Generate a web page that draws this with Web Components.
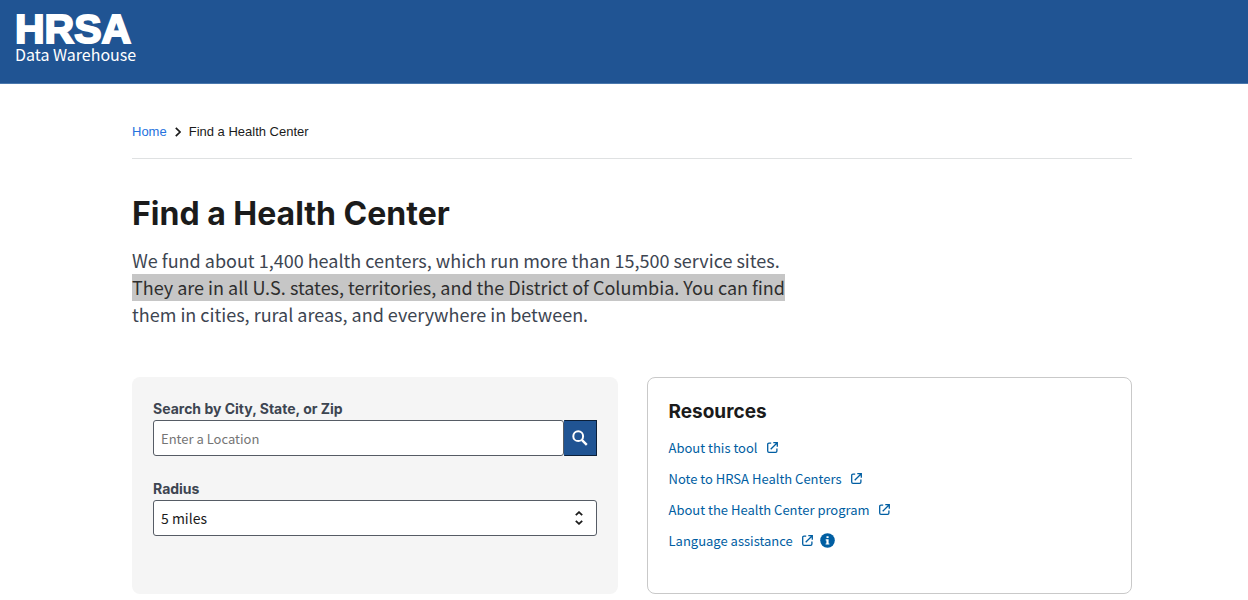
<!DOCTYPE html>
<html lang="en">
<head>
<meta charset="utf-8">
<meta name="viewport" content="width=device-width, initial-scale=1">
<title>Find a Health Center</title>
<style>
  body {
    margin: 0;
    background: #fff;
    color: #3d4551;
    --heading: Inter, "Liberation Sans", sans-serif;
    --text: "Noto Sans CJK SC", "Noto Sans", sans-serif;
    --brand: #205493;
    --link: #005ea2;
    font-family: var(--text);
  }
</style>
</head>
<body>
<site-header></site-header>
<page-content>
  <bread-crumb slot="crumbs" current="Find a Health Center"></bread-crumb>
  <span slot="title">Find a Health Center</span>
  <span slot="intro">We fund about 1,400 health centers, which run more than 15,500 service sites. <high-light>They are in all U.S. states, territories, and the District of Columbia. You can find</high-light> them in cities, rural areas, and everywhere in between.</span>
  <search-panel></search-panel>
  <resources-card>
    <resource-link>About this tool</resource-link>
    <resource-link>Note to HRSA Health Centers</resource-link>
    <resource-link>About the Health Center program</resource-link>
    <resource-link info>Language assistance</resource-link>
  </resources-card>
</page-content>

<script>
(function () {
  // shared base: each component only supplies its markup
  class BaseComp extends HTMLElement {
    connectedCallback() {
      if (this.shadowRoot) return;
      this.attachShadow({ mode: "open" }).innerHTML = this.render();
    }
  }

  class SiteHeader extends BaseComp {
    render() {
      return `
  <style>
    :host { display: block; background: var(--brand); border-bottom: 1px solid #4a78ad; }
    a { display: block; width: 150px; height: 83px; }
    svg { display: block; }
    .name { font: 700 41px "Liberation Sans", sans-serif; stroke: #fff; stroke-width: 2; }
    .sub { font: 16px "Noto Sans CJK SC", sans-serif; }
  </style>
  <a href="#" aria-label="HRSA Data Warehouse">
    <svg width="150" height="83" fill="#fff">
      <text class="name" x="15" y="43">HRSA</text>
      <text class="sub" x="15" y="61">Data Warehouse</text>
    </svg>
  </a>`;
    }
  }

  class PageContent extends BaseComp {
    render() {
      return `
  <style>
    :host { display: block; padding: 36px 116px 6px 132px; }
    h1 { margin: 34px 0 12px; font: 700 32px/42px var(--heading); color: #1b1b1b; }
    p { margin: 0 0 49px; max-width: 660px; font-size: 18px; line-height: 27px; }
    .cards { display: grid; grid-template-columns: 1fr 1fr; gap: 29px; }
  </style>
  <main>
    <slot name="crumbs"></slot>
    <h1><slot name="title"></slot></h1>
    <p><slot name="intro"></slot></p>
    <div class="cards"><slot></slot></div>
  </main>`;
    }
  }

  class BreadCrumb extends BaseComp {
    render() {
      return `
  <style>
    :host { display: block; border-bottom: 1px solid #dfe1e2; }
    nav {
      display: flex;
      align-items: center;
      gap: 8px;
      padding-bottom: 14px;
      font: 13px/24px "Liberation Sans", sans-serif;
      color: #1b1b1b;
    }
    a { color: #2672de; text-decoration: none; }
  </style>
  <nav aria-label="Breadcrumb">
    <a href="#">Home</a>
    <svg width="6" height="10" viewBox="0 0 6 10" fill="none" stroke="#1b1b1b" stroke-width="1.7"><path d="M.8.8 5 5 .8 9.2"/></svg>
    <span>${this.getAttribute("current")}</span>
  </nav>`;
    }
  }

  class HighLight extends BaseComp {
    render() {
      return `
  <style>
    :host { display: inline; }
    mark { padding-bottom: 1px; background: #c6c6c6; color: #2e2e2e; }
  </style>
  <mark><slot></slot></mark>`;
    }
  }

  class SearchPanel extends BaseComp {
    render() {
      return `
  <style>
    :host { display: block; background: #f5f5f5; border-radius: 8px; }
    form { padding: 20px 21px 58px; }
    label { display: block; font: 700 14px/23px var(--heading); color: #3d4551; }
    input, select {
      box-sizing: border-box;
      height: 36px;
      margin: 0;
      padding: 0 7px;
      border: 1px solid #565c65;
      border-radius: 3px;
      background: #fff;
      color: #1b1b1b;
      font: 14px var(--text);
    }
    input { flex: 1; min-width: 0; font-size: 13px; }
    input::placeholder { color: #757575; }
    .search { display: flex; margin-bottom: 21px; }
    button {
      display: flex;
      align-items: center;
      justify-content: center;
      width: 33px;
      padding: 0;
      border: 1px solid #0b1f38;
      border-left-color: var(--brand);
      background: var(--brand);
    }
    .drop { display: grid; align-items: center; }
    .drop > * { grid-area: 1 / 1; }
    .drop svg { justify-self: end; margin-right: 14px; pointer-events: none; }
    select { width: 100%; appearance: none; }
  </style>
  <form>
    <label for="place">Search by City, State, or Zip</label>
    <div class="search">
      <input id="place" type="text" placeholder="Enter a Location">
      <button type="button" aria-label="Search">
        <svg width="16" height="16" viewBox="0 0 16 16" fill="none" stroke="#fff" stroke-width="2"><circle cx="6.2" cy="6.2" r="4.9"/><path d="m9.8 9.8 5 5" stroke-width="2.4"/></svg>
      </button>
    </div>
    <label for="radius">Radius</label>
    <div class="drop">
      <select id="radius">
        <option>5 miles</option>
        <option>10 miles</option>
        <option>25 miles</option>
      </select>
      <svg width="8" height="14" viewBox="0 0 8 14" fill="none" stroke="#1b1b1b" stroke-width="1.8"><path d="M.8 4.2 4 1.2l3.2 3M.8 9.8l3.2 3 3.2-3"/></svg>
    </div>
  </form>`;
    }
  }

  class ResourcesCard extends BaseComp {
    render() {
      return `
  <style>
    :host { display: block; border: 1px solid #c9c9c9; border-radius: 8px; }
    section { padding: 20px 21px; }
    h2 { margin: 0 0 7px; font: 700 19px/27px var(--heading); color: #1b1b1b; }
  </style>
  <section>
    <h2>Resources</h2>
    <slot></slot>
  </section>`;
    }
  }

  class ResourceLink extends BaseComp {
    render() {
      // the info badge is only drawn with the "info" attribute
      const info = this.hasAttribute("info")
        ? `<svg width="15" height="15" viewBox="0 0 15 15"><circle cx="7.5" cy="7.5" r="7.3" fill="#005ea2"/><path d="M6.5 3.2h2.1v1.9H6.5zM5.7 6.2h2.9v4.2h.8v1.2H5.6v-1.2h.8V7.4h-.7z" fill="#fff"/></svg>`
        : "";
      return `
  <style>
    :host { display: flex; align-items: center; gap: 7px; height: 31px; }
    a { display: flex; align-items: center; gap: 9px; font-size: 13px; color: var(--link); text-decoration: none; }
  </style>
  <a href="#"><slot></slot>
    <svg width="11" height="11" viewBox="0 0 11 11" fill="none" stroke="#005ea2" stroke-width="1.3"><path d="M4.2 1.2H2C1.2 1.2.7 1.7.7 2.4v6.7c0 .7.5 1.2 1.3 1.2h6.6c.8 0 1.3-.5 1.3-1.2V6.6M3.7 7.3 10 1M6.3.7h4v4"/></svg></a>
  ${info}`;
    }
  }

  customElements.define("site-header", SiteHeader);
  customElements.define("page-content", PageContent);
  customElements.define("bread-crumb", BreadCrumb);
  customElements.define("high-light", HighLight);
  customElements.define("search-panel", SearchPanel);
  customElements.define("resources-card", ResourcesCard);
  customElements.define("resource-link", ResourceLink);
})();
</script>
</body>
</html>
